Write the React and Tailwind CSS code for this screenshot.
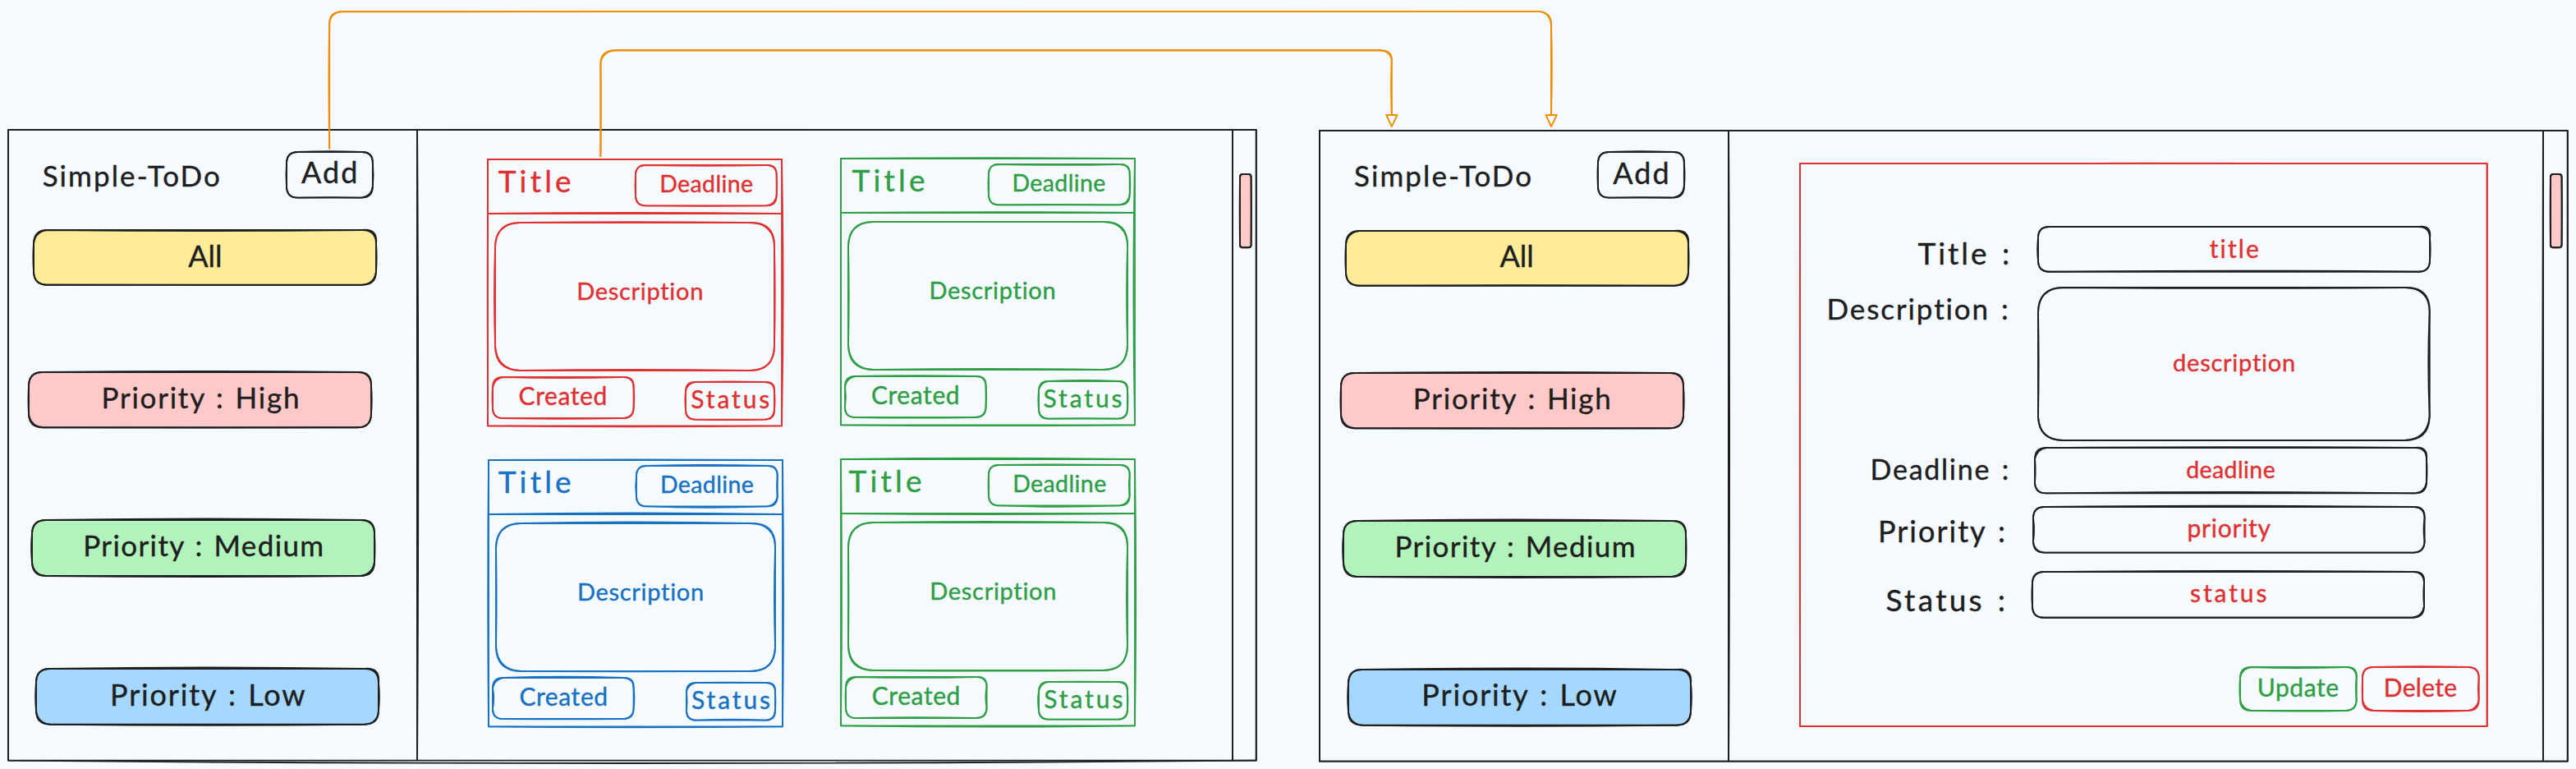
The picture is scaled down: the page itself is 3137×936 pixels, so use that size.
import React from "react";

const FONT = "font-['Excalifont','Virgil','Lato',sans-serif] [-webkit-text-stroke:0.4px_currentColor]";

// Closed rounded outline whose edges bow outward by the given amounts.
function outlinePath(w, h, r, bow, corner) {
  const [t, rt, b, l] = bow;
  const [tr, br, bl, tl] = corner;
  return [
    `M${r} 0`,
    `Q${w / 2} ${-t * 2} ${w - r} 0`,
    `Q${w - tr} ${tr} ${w} ${r}`,
    `Q${w + rt * 2} ${h / 2} ${w} ${h - r}`,
    `Q${w - br} ${h - br} ${w - r} ${h}`,
    `Q${w / 2} ${h + b * 2} ${r} ${h}`,
    `Q${bl} ${h - bl} 0 ${h - r}`,
    `Q${-l * 2} ${h / 2} 0 ${r}`,
    `Q${tl} ${tl} ${r} 0Z`,
  ].join("");
}

// Hand-drawn double stroke laid over the edges of its parent.
function Outline({ w, h, sharp = false, bow = [0.6, 0.6, 0.6, 0.6], corner = [0, 0, 0, 0], sw = 1.9 }) {
  const r = sharp ? 0 : Math.min(Math.min(w, h) * 0.25, 30.5);
  return (
    <svg className="pointer-events-none absolute inset-0 overflow-visible" width={w} height={h} fill="none" stroke="currentColor" strokeWidth={sw} strokeLinejoin="round">
      <path d={outlinePath(w, h, r, [0, 0, 0, 0], [0, 0, 0, 0])} />
      <path d={outlinePath(w, h, r, bow, corner)} />
    </svg>
  );
}

function Rule({ w = 0, h = 0, bow = 1, className = "" }) {
  const d = h
    ? `M0 0V${h}M0 0Q${bow * 2} ${h / 2} 0 ${h}`
    : `M0 0H${w}M0 0Q${w / 2} ${bow * 2} ${w} 0`;
  return (
    <svg className={`pointer-events-none block shrink-0 overflow-visible ${className}`} width={w || 1} height={h || 1} fill="none" stroke="currentColor" strokeWidth="2">
      <path d={d} />
    </svg>
  );
}

function Box({ w, h, bow, corner, className = "", children }) {
  return (
    <div className={`relative flex shrink-0 items-center justify-center whitespace-nowrap leading-none ${className}`}>
      {children}
      <Outline w={w} h={h} bow={bow} corner={corner} />
    </div>
  );
}

function Sidebar({ top = [1, 0.6, 0.3, 0.6] }) {
  return (
    <aside className="flex w-[497.8px] shrink-0 flex-col">
      <div className="flex items-start pt-[26.4px]">
        <h1 className="mt-[11px] w-[338.5px] shrink-0 pl-[41.5px] text-[35px] leading-none tracking-[2.1px] whitespace-nowrap">Simple-ToDo</h1>
        <Box w={104.9} h={55.6} bow={[0.8, 0.6, -0.5, 0.5]} corner={[-0.6, 1.4, 0, 0]} className="h-[55.6px] w-[104.9px] pb-[7px]">
          <span className="-mr-[2.1px] text-[36px] tracking-[2.1px]">Add</span>
        </Box>
      </div>
      <Box w={417} h={66.7} bow={top} corner={[-2.2, 1.4, 0, 1.6]} className="mt-[40px] ml-[31.1px] h-[66.7px] w-[417px] rounded-[14px] bg-[#ffec99] pb-[6px]">
        <span className="text-[36px]">All</span>
      </Box>
      <Box w={417} h={67.3} bow={[1, 0.7, 0.3, 0.5]} corner={[-1, 0, 1.6, 0]} className="mt-[106px] ml-[25.3px] h-[67.3px] w-[417px] rounded-[14px] bg-[#ffc9c9] pb-[6px]">
        <span className="-mr-[1.8px] text-[35px] tracking-[1.75px] [word-spacing:2.3px]">Priority : High</span>
      </Box>
      <Box w={417} h={68} bow={[1.6, 0.5, 1, 0.9]} corner={[-1, 2, 1.4, 0]} className="mt-[112.7px] ml-[29px] h-[68px] w-[417px] rounded-[14px] bg-[#b2f2bb] pb-[7px]">
        <span className="-mr-[1.4px] text-[35px] tracking-[1.4px] [word-spacing:2.3px]">Priority : Medium</span>
      </Box>
      <Box w={417} h={67.7} bow={[1.6, 0.9, 1, 0.8]} corner={[-2, 0.8, 1.6, 0]} className="mt-[113.3px] ml-[34.1px] h-[67.7px] w-[417px] rounded-[14px] bg-[#a5d8ff] pb-[7px]">
        <span className="-mr-[1.8px] text-[36px] tracking-[1.85px] [word-spacing:2.3px]">Priority : Low</span>
      </Box>
    </aside>
  );
}

function Card({ className, titleClass, bows }) {
  return (
    <article className={`relative flex h-[324.3px] w-[358px] shrink-0 flex-col ${className}`}>
      <Outline w={358} h={324.3} sharp bow={bows.frame} sw={1.8} />
      <header className="flex h-[65.3px] shrink-0 items-start justify-between pr-[6.3px]">
        <h2 className={`mt-[7.2px] text-[37px] leading-none tracking-[4.2px] whitespace-nowrap ${titleClass}`}>Title</h2>
        <Box w={171.7} h={49.4} bow={bows.deadline} corner={[-0.6, 1.6, 0.4, 0]} className="mt-[7px] h-[49.4px] w-[171.7px] pb-[5px]">
          <span className="-mr-[0.4px] text-[28.5px] tracking-[0.4px]">Deadline</span>
        </Box>
      </header>
      <Rule w={358} bow={bows.rule} />
      <Box w={340} h={180} bow={bows.desc} corner={[-1.4, 0, 1.6, 0.6]} className="mt-[10.4px] ml-[9px] h-[180px] w-[340px] pb-[15px] pl-[12px]">
        <span className="-mr-[0.7px] text-[29px] tracking-[0.7px]">Description</span>
      </Box>
      <footer className="flex items-start justify-between pt-[7.7px] pr-[9px] pl-[5.4px]">
        <Box w={171.6} h={50} bow={bows.created} corner={[-0.8, 0.6, 0, 2]} className="h-[50px] w-[171.6px] pb-[6px]">
          <span className="-mr-[0.6px] text-[30px] tracking-[0.6px]">Created</span>
        </Box>
        <Box w={108} h={45.6} bow={bows.status} corner={[-1, 0.8, 0.6, 1.6]} className="mt-[6px] h-[45.6px] w-[108px] pb-[5px]">
          <span className="-mr-[2.9px] text-[30px] tracking-[2.9px]">Status</span>
        </Box>
      </footer>
    </article>
  );
}

const RED = { frame: [0, 1.6, 1, 0.3], rule: -1, deadline: [-0.8, 0.4, 0.4, 0.5], desc: [0.8, 0.7, -1, 1], created: [-1, 0.6, 0.8, 0.5], status: [0.6, 0.5, 0.5, 0.6] };
const GREEN_A = { frame: [0.8, -1.6, 0.9, 0], rule: -0.8, deadline: [-0.9, 0.6, -0.4, 0.5], desc: [0, -0.9, -1, -0.7], created: [0.9, 0.6, 0.5, -0.9], status: [1, 0.4, -0.5, 0.6] };
const BLUE = { frame: [0.7, 1, 1, 0.8], rule: -1.6, deadline: [1, -0.6, 1.3, 0.8], desc: [1.6, -1, 0.2, -0.6], created: [1.3, 0.8, 0.2, -1.2], status: [0.2, 0.4, -0.8, -0.6] };
const GREEN_B = { frame: [1.4, 1.2, 1.4, -1], rule: 0.9, deadline: [0.5, -0.8, 1.4, 0.4], desc: [1.1, -1, 0.6, -0.4], created: [-0.9, -1.2, -0.9, 0.5], status: [0.4, 0.4, 0, 0.9] };

function Board() {
  return (
    <main className="flex w-[992.8px] shrink-0 flex-col gap-[41.7px] pt-[36px] pl-[86.3px]">
      <div className="flex gap-[71.3px]">
        <Card className="text-[#e03131]" titleClass="ml-[12.4px]" bows={RED} />
        <Card className="-mt-[1px] text-[#2f9e44]" titleClass="ml-[14px]" bows={GREEN_A} />
      </div>
      <div className="flex gap-[71.3px] pl-[0.8px]">
        <Card className="text-[#1971c2]" titleClass="ml-[11.6px]" bows={BLUE} />
        <Card className="-mt-[1px] text-[#2f9e44]" titleClass="ml-[9.2px]" bows={GREEN_B} />
      </div>
    </main>
  );
}

function Field({ label, labelClass, children, className = "" }) {
  return (
    <div className={`flex items-start ${className}`}>
      <label className={`block shrink-0 leading-none whitespace-nowrap [word-spacing:3px] ${labelClass}`}>{label}</label>
      {children}
    </div>
  );
}

function TaskForm() {
  return (
    <main className="w-[991.8px] shrink-0 pt-[39.6px] pl-[86.3px]">
      <form className="relative flex h-[685px] w-[836.7px] flex-col pt-[77.3px]">
        <div className="absolute inset-0 text-[#e03131]">
          <Outline w={836.7} h={685} sharp bow={[0.2, 0, 0, 0.2]} sw={1.9} />
        </div>
        <Field label="Title :" labelClass="w-[290.7px] pl-[143.9px] pt-[12.9px] text-[37px] tracking-[3px]">
          <Box w={477} h={54.7} bow={[0, 0.6, -1, 0.8]} corner={[-2.4, 0, 0, 0]} className="h-[54.7px] w-[477px] pb-[3px]">
            <span className="-mr-[2.1px] text-[30px] tracking-[2.1px] text-[#e03131]">title</span>
          </Box>
        </Field>
        <Field className="mt-[19px]" label="Description :" labelClass="w-[290.7px] pl-[33px] pt-[8.3px] text-[35px] tracking-[1.9px]">
          <Box w={476.7} h={186} bow={[-0.9, -1.4, 0, -0.6]} corner={[-1.4, 1.6, 0.6, 0.6]} className="h-[186px] w-[476.7px] pb-[4px]">
            <span className="-mr-[0.8px] text-[29px] tracking-[0.75px] text-[#e03131]">description</span>
          </Box>
        </Field>
        <Field className="mt-[9.6px]" label="Deadline :" labelClass="w-[286.4px] pl-[86px] pt-[8.8px] text-[34px] tracking-[1.75px]">
          <Box w={477} h={55.4} bow={[0.9, 0.5, -1.4, -0.6]} corner={[-1.8, 1.6, 0, 2]} className="h-[55.4px] w-[477px] pb-[4px]">
            <span className="-mr-[0.4px] text-[28.5px] tracking-[0.4px] text-[#e03131]">deadline</span>
          </Box>
        </Field>
        <Field className="mt-[16px]" label="Priority :" labelClass="w-[284.4px] pl-[95.4px] pt-[11.1px] text-[36px] tracking-[2px]">
          <Box w={476.6} h={55.6} bow={[1.2, -1, 0, -1]} corner={[-1, 0.6, 1, 0]} className="h-[55.6px] w-[476.6px] pb-[4px]">
            <span className="-mr-[0.8px] text-[30px] tracking-[0.75px] text-[#e03131]">priority</span>
          </Box>
        </Field>
        <Field className="mt-[23.7px]" label="Status :" labelClass="w-[283.7px] pl-[105px] pt-[15.5px] text-[37px] tracking-[3.3px]">
          <Box w={477} h={55.7} bow={[1, -0.6, 0, 0.6]} corner={[-1.6, 1.8, 0, 0.6]} className="h-[55.7px] w-[477px] pb-[5px]">
            <span className="-mr-[2.9px] text-[30px] tracking-[2.9px] text-[#e03131]">status</span>
          </Box>
        </Field>
        <div className="mt-[60px] flex justify-end gap-[7.3px] pr-[10px]">
          <Box w={141.7} h={53} bow={[-1, -0.8, 0.5, 0.6]} corner={[-1.4, 0.6, 2, 1.8]} className="h-[53px] w-[141.7px] pb-[5px] text-[#2f9e44]">
            <span className="-mr-[0.6px] text-[30px] tracking-[0.6px]">Update</span>
          </Box>
          <Box w={141.7} h={53} bow={[0.8, -0.8, 1, 0.3]} corner={[0, 1.8, 2, 0]} className="h-[53px] w-[141.7px] pb-[5px] text-[#e03131]">
            <span className="-mr-[0.4px] text-[30px] tracking-[0.35px]">Delete</span>
          </Box>
        </div>
      </form>
    </main>
  );
}

function Screen({ className = "", frame, divider, scrollDivider, barTop, children }) {
  return (
    <section className={`relative flex h-[767.6px] w-[1519.8px] shrink-0 ${className}`}>
      <Outline w={1519.8} h={767.6} sharp bow={frame} />
      <Sidebar top={barTop} />
      <Rule h={767.6} bow={divider} className="-mr-px" />
      {children}
      <Rule h={767.6} bow={scrollDivider} className="-mr-px" />
      <div className="flex grow justify-start pt-[53.4px] pl-[8.8px]">
        <Box w={13.6} h={89.3} bow={[0, 0.3, 0, 0.3]} className="h-[89.3px] w-[13.6px] rounded-[3px] bg-[#ffc9c9]" />
      </div>
    </section>
  );
}

function Connectors() {
  return (
    <svg className="pointer-events-none absolute inset-0" width="3137" height="936" fill="none" stroke="#f08c00" strokeWidth="1.9" strokeLinecap="round" strokeLinejoin="round">
      <path d="M401.2 180.5V28Q401.5 14.2 416 14.1L1872 13.9Q1889.2 14 1889 30V139" />
      <path d="M401.2 180.5Q399.8 90 401.2 28Q402.5 15 417 14.2Q1140 12 1873 13.9Q1887 14.5 1889 30Q1890.6 80 1889 139" />
      <path d="M1882.6 140L1895.8 140L1889 154Z" fill="#fff" />
      <path d="M731.4 190V77Q731.5 61.4 750 61.2H1681Q1694.8 61.5 1694.8 72V139" />
      <path d="M731.4 190Q732 120 731.4 77Q733.5 62 750 61.2Q1210 60.6 1681 61.2Q1693 62.5 1694.8 72Q1693.4 105 1694.8 139" />
      <path d="M1688.2 140L1701.4 140L1694.8 154Z" fill="#fff" />
    </svg>
  );
}

export default function App() {
  return (
    <div className={`relative flex h-[936px] w-[3137px] items-start gap-[77.5px] overflow-hidden bg-[#f5faff] pt-[158.3px] pl-[10.2px] text-[#1e1e1e] ${FONT}`}>
      <Screen frame={[0.1, 0, 3.4, 0]} divider={1.2} scrollDivider={0} barTop={[-1, 0.6, 0.2, 0.6]}>
        <Board />
      </Screen>
      <Screen className="mt-[0.7px]" frame={[0, 0, 0, 0]} divider={1} scrollDivider={-0.8} barTop={[0, 0.6, -0.4, 0.6]}>
        <TaskForm />
      </Screen>
      <Connectors />
    </div>
  );
}
